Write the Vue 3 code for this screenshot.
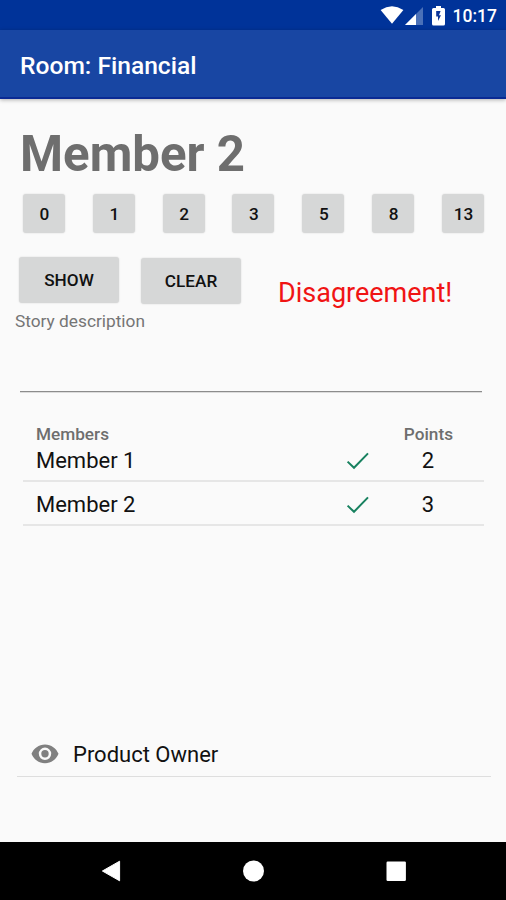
<template>
  <div class="screen">
    <div class="status-bar">
      <svg class="wifi" width="24" height="18" viewBox="0 0 24 18">
        <path d="M12 17.7 L0.6 4 Q12 -3.4 23.4 4 Z" fill="#fff" />
      </svg>
      <svg class="signal" width="18" height="18" viewBox="0 0 18 18">
        <path d="M18 0 V18 H0 Z" fill="#4a70b8" />
        <path d="M11 7 V18 H0 Z" fill="#fff" />
      </svg>
      <svg class="battery" width="13" height="20" viewBox="0 0 13 20">
        <path d="M4 0 H9 V2 H11.5 Q13 2 13 3.5 V18 Q13 19.5 11.5 19.5 H1.5 Q0 19.5 0 18 V3.5 Q0 2 1.5 2 H4 Z" fill="#fff" />
        <path d="M8.6 5 H4.2 V10.6 H6 V15 L9 9.2 H7 Z" fill="#0a3499" />
      </svg>
      <span class="clock">10:17</span>
    </div>

    <header class="toolbar">Room: Financial</header>

    <main class="content">
      <h1 class="name">Member 2</h1>

      <div class="points-row">
        <button v-for="point in points" :key="point" class="point-button">{{ point }}</button>
      </div>

      <div class="actions">
        <button class="action-button">SHOW</button>
        <button class="action-button clear">CLEAR</button>
        <span class="result">Disagreement!</span>
      </div>

      <div class="story">
        <label class="story-label">Story description</label>
      </div>

      <div class="members">
        <div class="members-header">
          <span>Members</span>
          <span>Points</span>
        </div>
        <div v-for="member in members" :key="member.name" class="member-row">
          <span class="member-name">{{ member.name }}</span>
          <svg class="check" width="24" height="18" viewBox="0 0 24 18">
            <path d="M1.6 9.6 L8 15.8 L22 1.4" fill="none" stroke="#17815f" stroke-width="2" />
          </svg>
          <span>{{ member.points }}</span>
        </div>
      </div>

      <div class="owner">
        <svg class="eye" width="28" height="20" viewBox="0 0 28 20">
          <path
            d="M14 0.4 C7.8 0.4 2.6 4.3 0.5 9.8 C2.6 15.3 7.8 19.2 14 19.2 C20.2 19.2 25.4 15.3 27.5 9.8 C25.4 4.3 20.2 0.4 14 0.4 Z M14 16 A6.2 6.2 0 1 1 14 3.6 A6.2 6.2 0 1 1 14 16 Z"
            fill="#808080"
            fill-rule="evenodd"
          />
          <circle cx="14" cy="9.8" r="3.7" fill="#808080" />
        </svg>
        <span>Product Owner</span>
      </div>
    </main>

    <nav class="nav-bar">
      <svg width="20" height="22" viewBox="0 0 20 22">
        <path d="M1.4 11 L18.6 1.2 V20.8 Z" fill="#fff" stroke="#fff" stroke-linejoin="round" />
      </svg>
      <svg width="22" height="22" viewBox="0 0 22 22">
        <circle cx="10.5" cy="11" r="10.5" fill="#fff" />
      </svg>
      <svg width="20" height="22" viewBox="0 0 20 22">
        <rect x="0.5" y="1.5" width="19.4" height="19.4" rx="1.2" fill="#fff" />
      </svg>
    </nav>
  </div>
</template>

<script setup>
import { ref } from 'vue'

const points = [0, 1, 2, 3, 5, 8, 13]

const members = ref([
  { name: 'Member 1', points: 2 },
  { name: 'Member 2', points: 3 }
])
</script>

<style>
body {
  margin: 0;
  background: #fafafa;
}
</style>

<style scoped>
.screen {
  display: flex;
  flex-direction: column;
  width: 506px;
  height: 900px;
  overflow: hidden;
  background: #fafafa;
  font-family: Roboto, sans-serif;
  color: #111;
}

.screen * {
  box-sizing: border-box;
}

.status-bar {
  display: flex;
  align-items: flex-start;
  justify-content: flex-end;
  height: 30px;
  padding: 6px 9px 0 0;
  background: #003399;
  color: #fff;
}

.signal {
  margin: 1px 9px 0 1px;
}

.battery {
  margin-right: 8px;
}

.clock {
  font-size: 17.5px;
  font-weight: 500;
  line-height: 20px;
}

.toolbar {
  position: relative;
  flex: none;
  height: 69px;
  padding-left: 20px;
  border-bottom: 2px solid #0a2a94;
  background: #1846a3;
  box-shadow: 0 1px 4px rgba(0, 0, 0, 0.3);
  color: #fff;
  font-size: 24.6px;
  font-weight: 500;
  line-height: 71px;
}

.content {
  display: flex;
  flex: 1;
  flex-direction: column;
}

.name {
  margin: 26px 0 0 20px;
  color: #6e6e6e;
  font-size: 49.2px;
  font-weight: 700;
  line-height: 58px;
}

.points-row {
  display: flex;
  justify-content: space-between;
  margin: 11px 22px 0 23px;
}

.point-button,
.action-button {
  padding: 0;
  border: 0;
  border-radius: 3px;
  background: #d6d7d7;
  box-shadow: 0 0 2px rgba(0, 0, 0, 0.14);
  color: #111;
  font-family: inherit;
  font-size: 17.2px;
  font-weight: 500;
}

.point-button {
  width: 42px;
  height: 39px;
  padding: 1px 0 0 1px;
  line-height: 38px;
}

.actions {
  display: flex;
  margin: 24px 0 0 19px;
}

.action-button {
  width: 100px;
  height: 46px;
  line-height: 46px;
}

.clear {
  margin: 1px 0 0 22px;
}

.result {
  margin: 20px 0 0 37px;
  color: #f01414;
  font-size: 27px;
  line-height: 32px;
}

.story {
  height: 83px;
  margin: 0 24px 0 20px;
  border-bottom: 1px solid #8c8c8c;
  box-shadow: 0 1px 0 #dcdcdc;
}

.story-label {
  display: block;
  margin: 2px 0 0 -5px;
  color: #757575;
  font-size: 17.3px;
  line-height: 20px;
}

.members {
  margin: 32px 22px 0 23px;
}

.members-header {
  display: flex;
  justify-content: space-between;
  padding: 0 31px 0 13px;
  color: #6e6e6e;
  font-size: 17.2px;
  font-weight: 500;
  line-height: 20px;
}

.member-row {
  display: flex;
  align-items: center;
  height: 44px;
  padding: 3px 50px 0 13px;
  border-bottom: 2px solid #e6e6e6;
  font-size: 22px;
  line-height: 26px;
}

.members-header + .member-row {
  height: 38px;
  padding-bottom: 6px;
}

.member-name {
  flex: 1;
}

.check {
  margin-right: 52px;
}

.owner {
  display: flex;
  align-items: center;
  height: 44px;
  margin: auto 15px 65px 17px;
  padding-left: 14px;
  border-bottom: 1px solid #dedede;
  font-size: 22px;
}

.eye {
  margin: 0 14px 2px 0;
}

.nav-bar {
  display: flex;
  flex: none;
  align-items: center;
  justify-content: space-between;
  height: 58px;
  padding: 0 100px 0 101px;
  background: #000;
}
</style>
